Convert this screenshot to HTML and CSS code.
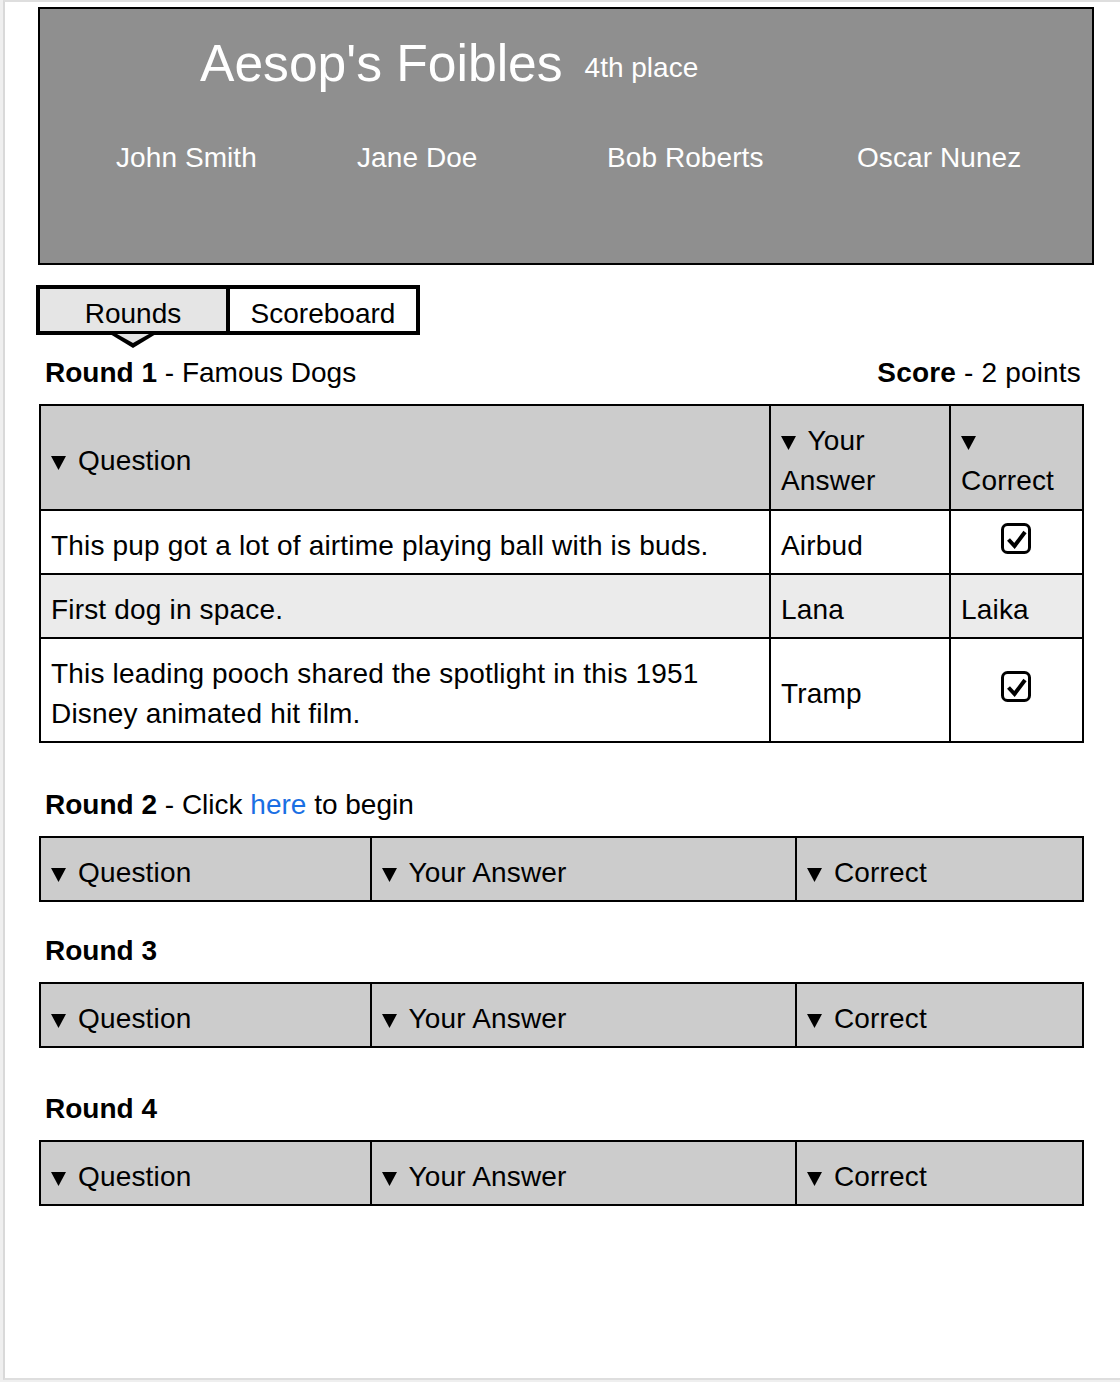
FILE: index.html
```html
<!DOCTYPE html>
<html lang="en">
<head>
<meta charset="utf-8">
<title>Aesop's Foibles</title>
<link rel="stylesheet" href="styles.css">
</head>
<body>
<div class="page">
  <header class="team">
    <h1 class="team-name">Aesop's Foibles<span class="place">4th place</span></h1>
    <ul class="members">
      <li>John Smith</li>
      <li>Jane Doe</li>
      <li>Bob Roberts</li>
      <li>Oscar Nunez</li>
    </ul>
  </header>

  <nav class="tabs">
    <div class="tab tab-active">Rounds</div>
    <div class="tab">Scoreboard</div>
  </nav>

  <div class="round-head round-head-1">
    <h2 class="round-title"><b>Round 1</b> - Famous Dogs</h2>
    <p class="round-score"><b>Score</b> - 2 points</p>
  </div>
  <table class="qtable">
    <colgroup><col class="r1-q"><col class="r1-a"><col class="r1-c"></colgroup>
    <thead>
      <tr>
        <th><i class="tri"></i> Question</th>
        <th><i class="tri"></i> Your Answer</th>
        <th><i class="tri"></i> Correct</th>
      </tr>
    </thead>
    <tbody>
      <tr>
        <td>This pup got a lot of airtime playing ball with is buds.</td>
        <td>Airbud</td>
        <td class="check"><svg class="checkbox" viewBox="0 0 30 31" width="30" height="31"><rect x="1.5" y="1.5" width="27" height="28" rx="5" ry="5" fill="none" stroke="#000" stroke-width="3"/><path d="M7.5 16.5 L13.5 23 L24 9" fill="none" stroke="#000" stroke-width="4"/></svg></td>
      </tr>
      <tr class="row-alt">
        <td>First dog in space.</td>
        <td>Lana</td>
        <td>Laika</td>
      </tr>
      <tr>
        <td>This leading pooch shared the spotlight in this 1951 Disney animated hit film.</td>
        <td>Tramp</td>
        <td class="check"><svg class="checkbox" viewBox="0 0 30 31" width="30" height="31"><rect x="1.5" y="1.5" width="27" height="28" rx="5" ry="5" fill="none" stroke="#000" stroke-width="3"/><path d="M7.5 16.5 L13.5 23 L24 9" fill="none" stroke="#000" stroke-width="4"/></svg></td>
      </tr>
    </tbody>
  </table>

  <div class="round-head round-head-2">
    <h2 class="round-title"><b>Round 2</b> - Click <a class="link" href="#">here</a> to begin</h2>
  </div>
  <table class="qtable qtable-empty">
    <colgroup><col class="rx-q"><col class="rx-a"><col class="rx-c"></colgroup>
    <thead>
      <tr>
        <th><i class="tri"></i> Question</th>
        <th><i class="tri"></i> Your Answer</th>
        <th><i class="tri"></i> Correct</th>
      </tr>
    </thead>
  </table>

  <div class="round-head round-head-3">
    <h2 class="round-title"><b>Round 3</b></h2>
  </div>
  <table class="qtable qtable-empty">
    <colgroup><col class="rx-q"><col class="rx-a"><col class="rx-c"></colgroup>
    <thead>
      <tr>
        <th><i class="tri"></i> Question</th>
        <th><i class="tri"></i> Your Answer</th>
        <th><i class="tri"></i> Correct</th>
      </tr>
    </thead>
  </table>

  <div class="round-head round-head-4">
    <h2 class="round-title"><b>Round 4</b></h2>
  </div>
  <table class="qtable qtable-empty">
    <colgroup><col class="rx-q"><col class="rx-a"><col class="rx-c"></colgroup>
    <thead>
      <tr>
        <th><i class="tri"></i> Question</th>
        <th><i class="tri"></i> Your Answer</th>
        <th><i class="tri"></i> Correct</th>
      </tr>
    </thead>
  </table>
</div>
</body>
</html>
```

FILE: styles.css
```css
html, body {
  margin: 0;
  padding: 0;
}

body {
  background: #efefef;
  font-family: "Liberation Sans", Arial, sans-serif;
  color: #000;
}

.page {
  margin-left: 3px;
  height: 1380px;
  box-sizing: border-box;
  border-top: 2px solid #dedede;
  border-left: 2px solid #d9d9d9;
  border-bottom: 2px solid #dedede;
  background: #fff;
  font-size: 28px;
  line-height: 40px;
  overflow: hidden;
}

/* Team header */
.team {
  margin: 5px 0 0 33px;
  width: 1056px;
  height: 258px;
  box-sizing: border-box;
  border: 2px solid #000;
  background: #8f8f8f;
  color: #fff;
  padding-top: 24px;
}

.team-name {
  margin: 0;
  padding-left: 160px;
  font-size: 51.6px;
  line-height: 60px;
  font-weight: normal;
}

.place {
  margin-left: 22px;
  font-size: 28px;
  line-height: 1;
  vertical-align: 4px;
}

.members {
  list-style: none;
  margin: 45px 0 0 0;
  padding: 0 0 0 76px;
  display: grid;
  grid-template-columns: 241px 250px 250px auto;
  font-size: 28px;
  line-height: 40px;
  letter-spacing: 0.08px;
}

/* Tabs */
.tabs {
  display: flex;
  width: fit-content;
  margin: 20px 0 0 31px;
  border: 4px solid #000;
}

.tab {
  width: 186px;
  height: 42px;
  box-sizing: border-box;
  padding-top: 7px;
  line-height: 35px;
  text-align: center;
  background: #fff;
}

.tab + .tab {
  width: 190px;
  border-left: 4px solid #000;
}

.tab-active {
  position: relative;
  background: #e5e5e5;
}

.tab-active::before,
.tab-active::after {
  content: "";
  position: absolute;
  left: 50%;
  width: 0;
  height: 0;
  border-style: solid;
  border-color: transparent;
}

.tab-active::before {
  top: calc(100% + 3px);
  margin-left: -23px;
  border-width: 14px 23px 0 23px;
  border-top-color: #000;
}

.tab-active::after {
  top: calc(100% + 3px);
  margin-left: -16px;
  border-width: 9px 16px 0 16px;
  border-top-color: #e5e5e5;
}

/* Round headings */
.round-head {
  display: flex;
  justify-content: space-between;
  width: 1044px;
  box-sizing: border-box;
  margin-left: 34px;
  padding: 1px 2px 0 6px;
  line-height: 40px;
}

.round-head-1 { margin-top: 17px; }
.round-head-2 { margin-top: 41px; }
.round-head-3 { margin-top: 28px; }
.round-head-4 { margin-top: 40px; }

.round-title,
.round-score {
  margin: 0;
  font-size: 28px;
  font-weight: normal;
}

.round-score {
  letter-spacing: 0.18px;
}

.round-title b,
.round-score b {
  font-weight: bold;
}

.link {
  color: #1a6fe3;
  text-decoration: none;
}

/* Tables */
.qtable {
  margin: 11px 0 0 34px;
  width: 1043px;
  border-collapse: collapse;
  table-layout: fixed;
  font-size: 28px;
  line-height: 40px;
  letter-spacing: 0.18px;
}

.qtable th,
.qtable td {
  border: 2px solid #000;
  padding: 15px 11px 7px 10px;
  text-align: left;
  vertical-align: middle;
  font-weight: normal;
}

.qtable th {
  background: #cccccc;
  padding-bottom: 8px;
}

.qtable-empty th {
  padding-bottom: 7px;
}

.row-alt td {
  background: #ebebeb;
}

.r1-q { width: 730px; }
.r1-a { width: 180px; }
.r1-c { width: 133px; }

.rx-q { width: 331px; }
.rx-a { width: 425px; }
.rx-c { width: 287px; }

.tri {
  display: inline-block;
  width: 15px;
  height: 14px;
  margin-right: 4px;
  background: #000;
  clip-path: polygon(0 0, 100% 0, 50% 100%);
  vertical-align: baseline;
}

.qtable td.check {
  text-align: center;
  padding: 8px 11px 15px 10px;
}

.checkbox {
  display: block;
  margin: 0 auto;
}
```
